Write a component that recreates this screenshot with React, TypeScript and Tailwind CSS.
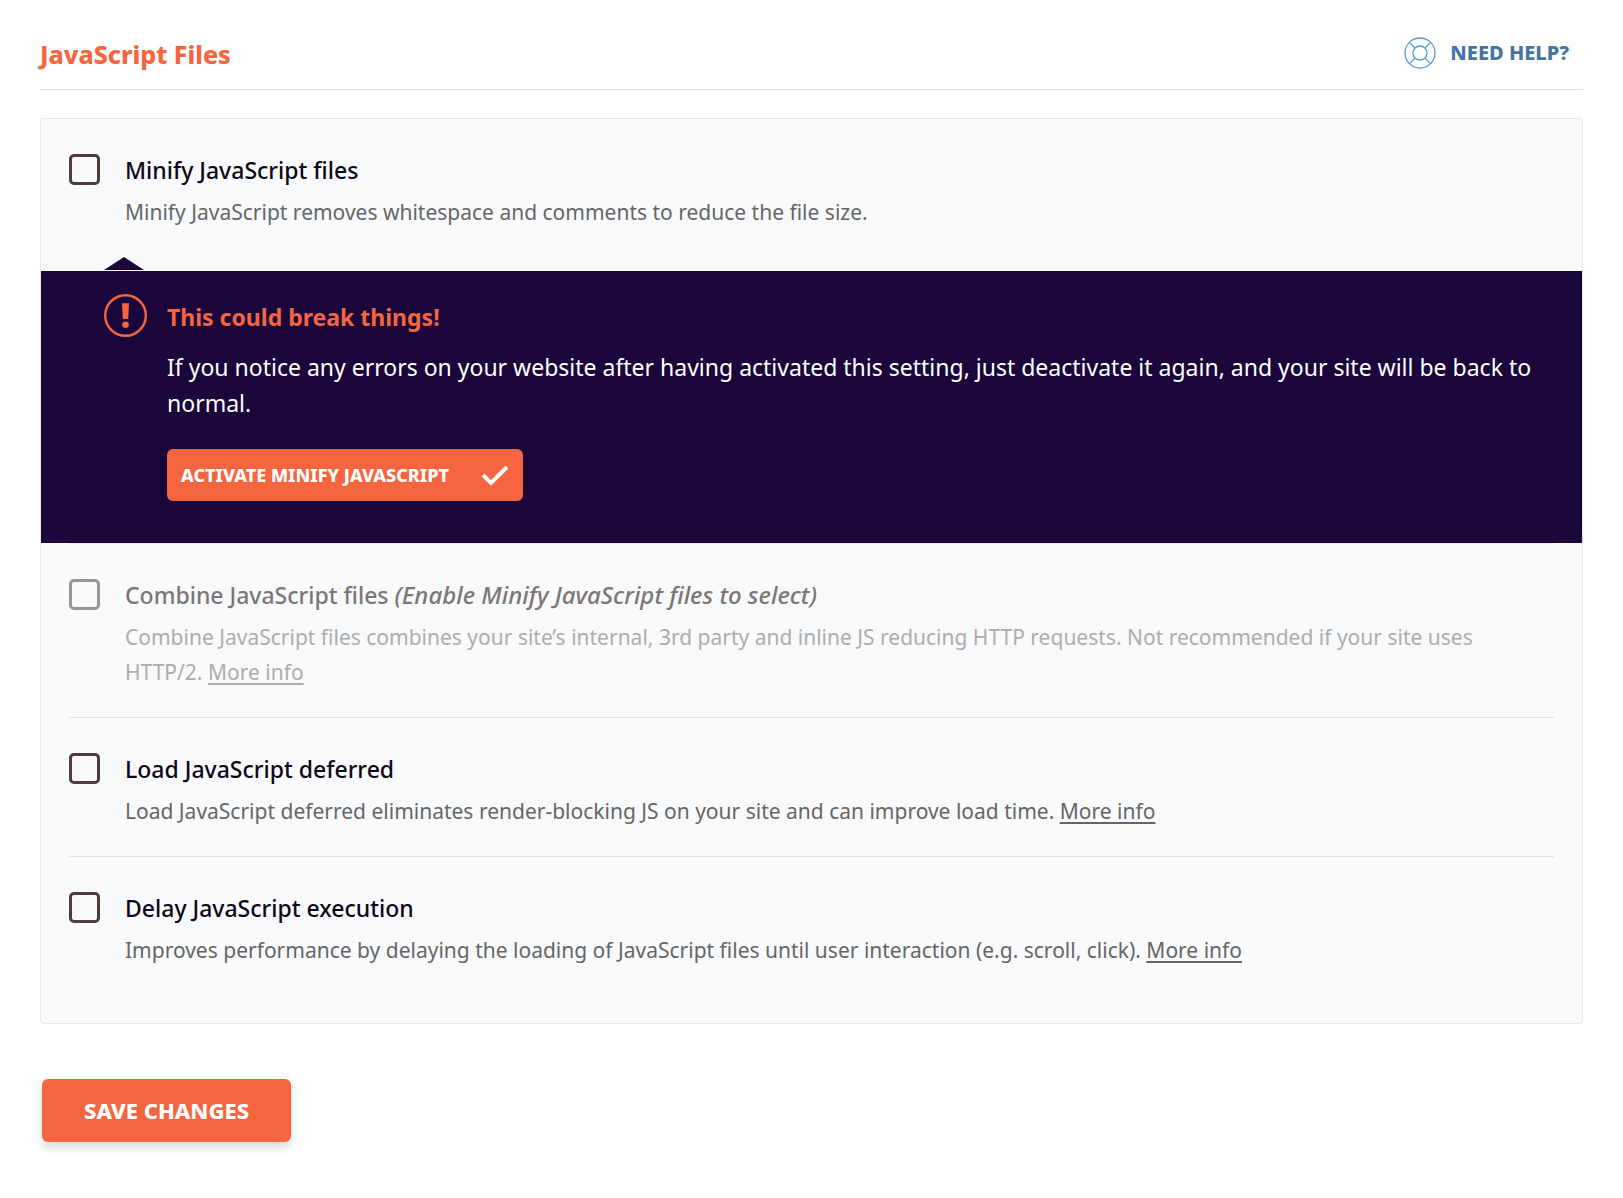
import React, { useState } from 'react'

interface OptionRowProps {
  id: string
  title: React.ReactNode
  disabled?: boolean
  className?: string
  children: React.ReactNode
}

function OptionRow({ id, title, disabled, className = '', children }: OptionRowProps) {
  return (
    <div className={`flex items-start gap-[25px] pt-[34px] ${className}`}>
      <input
        id={id}
        type="checkbox"
        disabled={disabled}
        className="mt-px h-[31px] w-[31px] shrink-0 appearance-none rounded-[5px] border-3 border-[#523b3b] checked:bg-[#f56640] disabled:border-[#959799]"
      />
      <div className="min-w-0 flex-1">
        <label
          htmlFor={id}
          className={`block text-[23px] leading-[34px] font-medium ${disabled ? 'text-[#7d7676]' : 'text-[#0d0719]'}`}
        >
          {title}
        </label>
        <p className={`mt-2 text-[21px] leading-[35px] ${disabled ? 'text-[#adadae]' : 'text-[#666666]'}`}>
          {children}
        </p>
      </div>
    </div>
  )
}

function MoreInfo() {
  return (
    <a href="#more-info" className="underline decoration-2 underline-offset-3">
      More info
    </a>
  )
}

function HelpIcon() {
  return (
    <svg viewBox="0 0 32 32" className="size-8" fill="none" stroke="#5b9bd0" strokeWidth="1.3" aria-hidden="true">
      <circle cx="16" cy="16" r="15" />
      <circle cx="16" cy="16" r="7" />
      <path d="M5.4 5.4l5.6 5.6M26.6 5.4L21 11M5.4 26.6L11 21M26.6 26.6L21 21" />
    </svg>
  )
}

function WarningIcon() {
  return (
    <svg viewBox="0 0 43 43" className="size-[43px] shrink-0" aria-hidden="true">
      <circle cx="21.5" cy="21.5" r="20.3" fill="none" stroke="#f56640" strokeWidth="2.4" />
      <path d="M18 9.3h7l-.8 15.7h-5.4z" fill="#f56640" />
      <circle cx="21.5" cy="30.8" r="3.3" fill="#f56640" />
    </svg>
  )
}

function BreakWarning({ onActivate }: { onActivate: () => void }) {
  return (
    <div className="relative bg-[#1a063a] pt-[23px] pr-12 pb-[42px] pl-[63px] text-white">
      <svg viewBox="0 0 40 13" className="absolute bottom-full left-[63px] mb-px h-[13px] w-10" aria-hidden="true">
        <path d="M0 13L20 0l20 13z" fill="#1a063a" />
      </svg>
      <div className="flex items-start gap-5">
        <WarningIcon />
        <div className="min-w-0 flex-1">
          <h3 className="pt-[5px] text-[23px] leading-9 font-bold text-[#f56640]">This could break things!</h3>
          <p className="mt-3.5 text-[23px] leading-9">
            If you notice any errors on your website after having activated this setting, just deactivate it again, and
            your site will be back to normal.
          </p>
          <button
            onClick={onActivate}
            className="mt-7 flex h-13 cursor-pointer items-center gap-8 rounded-md bg-[#f56640] px-3.5 text-lg font-extrabold uppercase"
          >
            Activate minify JavaScript
            <svg viewBox="0 0 28 22" className="h-[22px] w-7" fill="none" stroke="white" strokeWidth="4" aria-hidden="true">
              <path d="M2 11l8 8L26 3" />
            </svg>
          </button>
        </div>
      </div>
    </div>
  )
}

export default function App() {
  const [warning, setWarning] = useState(true)

  return (
    <main className="min-h-screen bg-white px-10 pt-9 pb-14 font-['Segoe_UI','Noto_Sans',sans-serif]">
      <header className="flex items-start justify-between border-b border-[#dfe3e8] pr-3.5 pb-[17px]">
        <h2 className="text-[25px] leading-9 font-extrabold text-[#f56640]">JavaScript Files</h2>
        <a
          href="#help"
          className="flex items-center gap-3.5 text-xl leading-[34px] font-extrabold text-[#4874a2] uppercase"
        >
          <HelpIcon />
          Need help?
        </a>
      </header>

      <section className="mt-7 rounded-sm border border-[#e6e8ec] bg-[#f9fafc]">
        <div className="px-7">
          <OptionRow id="minify" title="Minify JavaScript files" className="pb-[41px]">
            Minify JavaScript removes whitespace and comments to reduce the file size.
          </OptionRow>
        </div>
        {warning && <BreakWarning onActivate={() => setWarning(false)} />}
        <div className="mx-7 divide-y divide-[#dfe3e6] border-t border-[#ebe6f4]">
          <OptionRow
            id="combine"
            disabled
            className="pb-[27px]"
            title={
              <>
                Combine JavaScript files <em className="text-2xl">(Enable Minify JavaScript files to select)</em>
              </>
            }
          >
            Combine JavaScript files combines your site’s internal, 3rd party and inline JS reducing HTTP requests. Not
            recommended if your site uses HTTP/2. <MoreInfo />
          </OptionRow>
          <OptionRow id="defer" title="Load JavaScript deferred" className="pb-[27px]">
            Load JavaScript deferred eliminates render-blocking JS on your site and can improve load time. <MoreInfo />
          </OptionRow>
          <OptionRow id="delay" title="Delay JavaScript execution" className="pb-[55px]">
            Improves performance by delaying the loading of JavaScript files until user interaction (e.g. scroll,
            click). <MoreInfo />
          </OptionRow>
        </div>
      </section>

      <button className="mt-[55px] ml-0.5 h-[63px] cursor-pointer rounded-md bg-[#f56640] px-[42px] text-[22px] font-extrabold text-white uppercase shadow-[0_5px_10px_rgba(30,40,60,0.18)]">
        Save changes
      </button>
    </main>
  )
}
